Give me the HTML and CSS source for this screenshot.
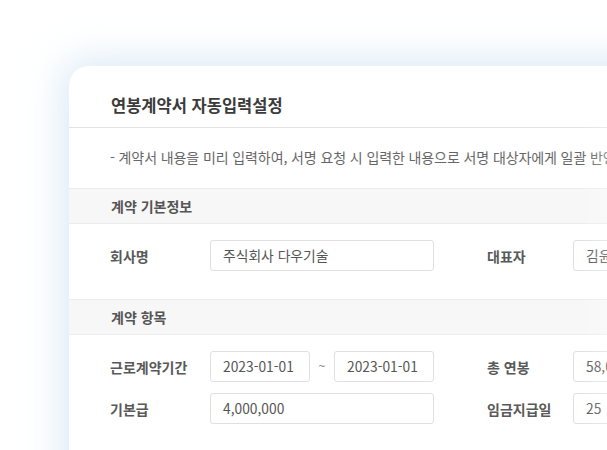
FILE: index.html
```html
<!DOCTYPE html>
<html lang="ko">
<head>
<meta charset="utf-8">
<title>연봉계약서 자동입력설정</title>
<link rel="stylesheet" href="styles.css">
</head>
<body>
<div class="stage">
  <section class="card">
    <header class="card-head">
      <h1 class="card-title">연봉계약서 자동입력설정</h1>
    </header>
    <p class="desc">- 계약서 내용을 미리 입력하여, 서명 요청 시 입력한 내용으로 서명 대상자에게 일괄 반영됩니다.</p>

    <div class="band">계약 기본정보</div>
    <div class="rows rows-basic">
      <div class="row">
        <div class="field">
          <span class="label">회사명</span>
          <span class="input wide">주식회사 다우기술</span>
        </div>
        <div class="field">
          <span class="label label-2">대표자</span>
          <span class="input wide">김윤덕</span>
        </div>
      </div>
    </div>

    <div class="band">계약 항목</div>
    <div class="rows">
      <div class="row">
        <div class="field">
          <span class="label">근로계약기간</span>
          <span class="input date">2023-01-01</span>
          <span class="tilde">~</span>
          <span class="input date">2023-01-01</span>
        </div>
        <div class="field">
          <span class="label label-2">총 연봉</span>
          <span class="input wide">58,000,000</span>
        </div>
      </div>
      <div class="row">
        <div class="field">
          <span class="label">기본급</span>
          <span class="input wide">4,000,000</span>
        </div>
        <div class="field">
          <span class="label label-2">임금지급일</span>
          <span class="input wide">25</span>
        </div>
      </div>
    </div>
    <div class="fade"></div>
  </section>
</div>
</body>
</html>
```

FILE: styles.css
```css
html, body {
  margin: 0;
  padding: 0;
  background: #ffffff;
  width: 607px;
  height: 450px;
  overflow: hidden;
  font-family: "Noto Sans CJK KR", "Noto Sans", sans-serif;
}

.stage {
  padding: 66px 0 0 69px;
}

.card {
  position: relative;
  width: 760px;
  height: 500px;
  background: #ffffff;
  border-radius: 20px 0 0 0;
  box-shadow: 0 0 36px 8px rgba(198, 222, 242, 0.6);
}

.fade {
  position: absolute;
  top: 0;
  left: 510px;
  width: 40px;
  height: 100%;
  background: linear-gradient(to right, rgba(255, 255, 255, 0), rgba(255, 255, 255, 0.35));
  pointer-events: none;
}

.card-head {
  height: 62px;
  box-sizing: border-box;
  border-bottom: 1px solid #e3e3e3;
  padding: 28px 0 0 42px;
}

.card-title {
  margin: 0;
  font-size: 16.5px;
  font-weight: 700;
  color: #3b3b3b;
  line-height: 22px;
}

.desc {
  margin: 0;
  height: 60px;
  box-sizing: border-box;
  padding: 18px 0 0 41px;
  font-size: 14px;
  line-height: 22px;
  color: #666;
  white-space: nowrap;
  letter-spacing: -0.1px;
  font-weight: 400;
}

.band {
  height: 34px;
  background: #f7f7f7;
  border-top: 1px solid #ececec;
  border-bottom: 1px solid #ececec;
  padding-left: 42px;
  font-size: 14px;
  font-weight: 700;
  color: #555;
  line-height: 35px;
}

.rows {
  padding: 16px 0 0 41px;
  display: flex;
  flex-direction: column;
  gap: 11px;
}

.rows-basic {
  height: 75px;
  box-sizing: border-box;
}

.row {
  display: flex;
  align-items: center;
  height: 31px;
}

.field {
  display: flex;
  align-items: center;
}

.label {
  width: 100px;
  font-size: 14px;
  font-weight: 700;
  color: #595959;
  white-space: nowrap;
}

.label-2 {
  width: 86px;
  margin-left: 53px;
}

.input {
  box-sizing: border-box;
  height: 31px;
  border: 1px solid #e0e0e0;
  border-radius: 3px;
  padding-left: 12px;
  font-size: 13.8px;
  line-height: 29px;
  color: #555;
  background: #fff;
  white-space: nowrap;
  overflow: hidden;
}

.wide {
  width: 224px;
}

.date {
  width: 100px;
}

.tilde {
  width: 24px;
  text-align: center;
  color: #8a8a8a;
  font-size: 12px;
  font-family: "Noto Sans", sans-serif;
}
```
